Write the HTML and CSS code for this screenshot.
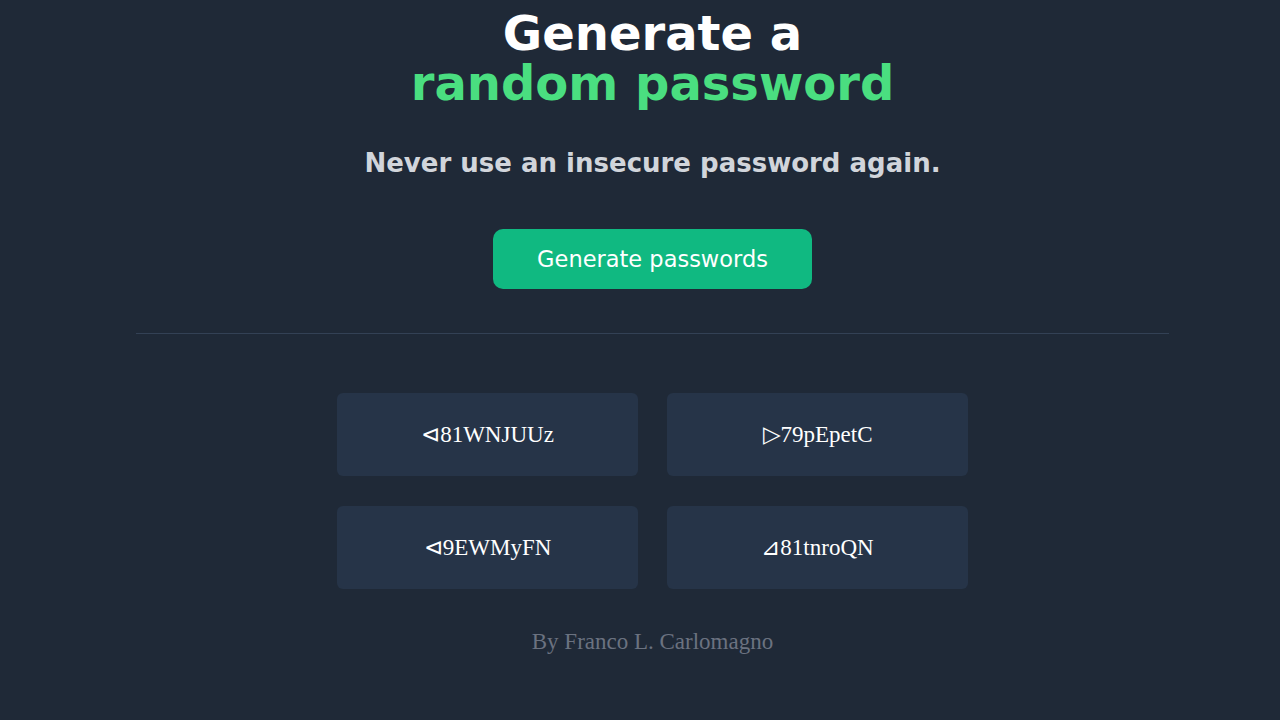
FILE: index.html
```html
<!DOCTYPE html>
<html>
<head>
<meta charset="utf-8">
<link rel="stylesheet" href="styles.css">
</head>
<body>
<main class="page">
  <h1 class="title">Generate a<br><span class="accent">random password</span></h1>
  <p class="subtitle">Never use an insecure password again.</p>
  <button class="btn">Generate passwords</button>
  <hr class="divider">
  <section class="grid">
    <div class="card">⊲81WNJUUz</div>
    <div class="card">▷79pEpetC</div>
    <div class="card">⊲9EWMyFN</div>
    <div class="card">⊿81tnroQN</div>
  </section>
  <footer class="footer">By Franco L. Carlomagno</footer>
</main>
</body>
</html>
```
FILE: styles.css
```css
html, body {
  margin: 0;
  padding: 0;
  background: #1f2937;
  height: 100%;
}
.page {
  display: flex;
  flex-direction: column;
  align-items: center;
  padding-top: 8px;
  padding-left: 25px;
}
.title {
  margin: 0;
  font-family: "DejaVu Sans", Verdana, sans-serif;
  font-weight: bold;
  font-size: 48px;
  line-height: 50px;
  color: #ffffff;
  text-align: center;
}
.accent {
  color: #4ade80;
}
.subtitle {
  margin: 40px 0 0;
  font-family: "DejaVu Sans", Verdana, sans-serif;
  font-weight: bold;
  font-size: 26px;
  line-height: 30px;
  color: #d1d5db;
}
.btn {
  margin-top: 51px;
  width: 319px;
  height: 60px;
  border: none;
  border-radius: 10px;
  background: #10b981;
  color: #ffffff;
  font-family: "DejaVu Sans", Verdana, sans-serif;
  font-size: 22.5px;
}
.divider {
  width: 1033px;
  margin: 44px 0 0;
  border: none;
  border-top: 1px solid #334155;
}
.grid {
  margin-top: 59px;
  display: grid;
  grid-template-columns: 301px 301px;
  column-gap: 29px;
  row-gap: 30px;
}
.card {
  height: 83px;
  border-radius: 6px;
  background: #263448;
  color: #ffffff;
  font-family: "Liberation Serif", "Times New Roman", serif;
  font-size: 23px;
  display: flex;
  align-items: center;
  justify-content: center;
}
.footer {
  margin-top: 40px;
  font-family: "Liberation Serif", "Times New Roman", serif;
  font-size: 23px;
  color: #6b7280;
}
```
